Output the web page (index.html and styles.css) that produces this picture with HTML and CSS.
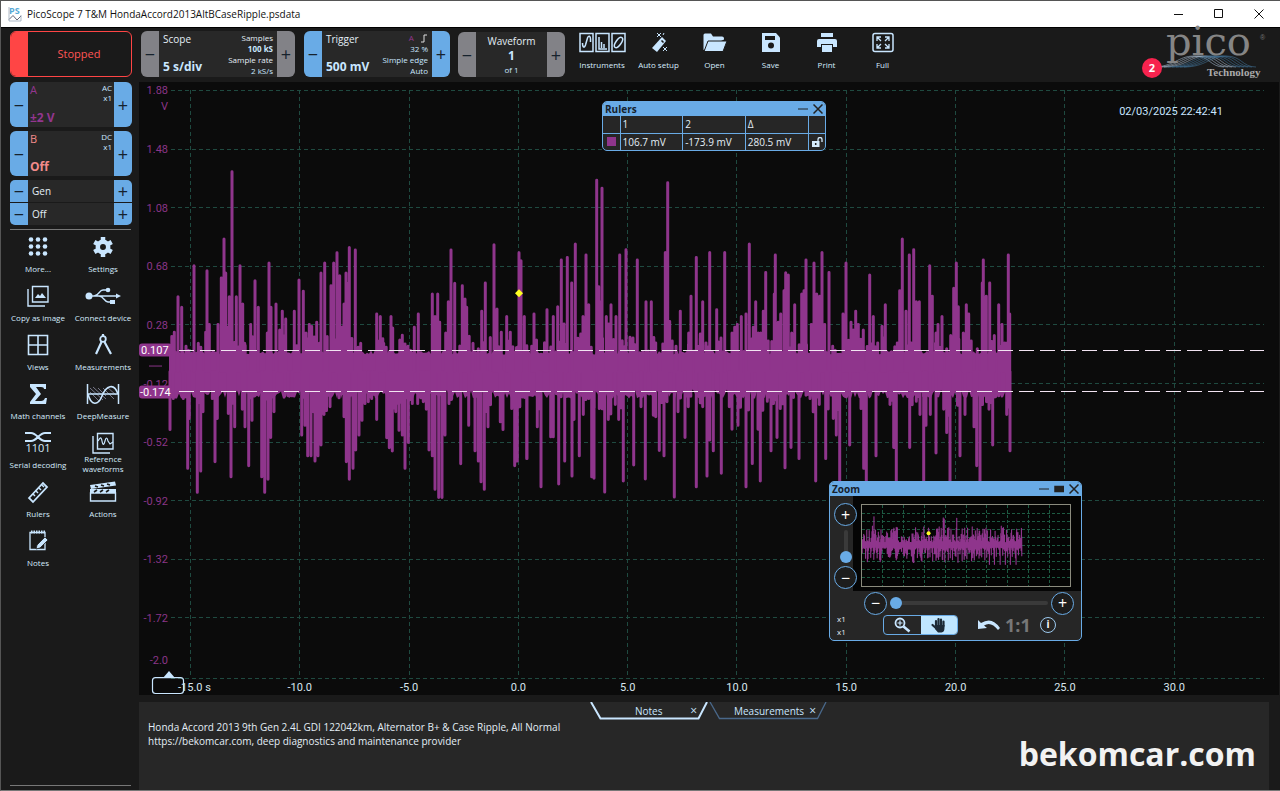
FILE: index.html
```html
<!DOCTYPE html>
<html lang="en">
<head>
<meta charset="utf-8">
<title>PicoScope 7 T&amp;M HondaAccord2013AltBCaseRipple.psdata</title>
<link rel="stylesheet" href="styles.css">
</head>
<body>
<div class="app">
  <header class="titlebar">
    <svg class="app-icon" viewBox="0 0 14 16" aria-hidden="true"><text x="1" y="8" class="app-icon-text">PS</text><path d="M1 13.500l4-4 4 4.500 4-4" fill="none" stroke="#667" stroke-width="1"/><path d="M1 1v14h12V9" fill="none" stroke="#9ab" stroke-width=".8"/></svg>
    <span class="title">PicoScope 7 T&amp;M HondaAccord2013AltBCaseRipple.psdata</span>
    <div class="win-controls">
      <button aria-label="Minimise"><svg viewBox="0 0 12 12"><path d="M1 6.500h9"/></svg></button>
      <button aria-label="Maximise"><svg viewBox="0 0 12 12"><path d="M1.500 1.500h8v8h-8z"/></svg></button>
      <button aria-label="Close"><svg viewBox="0 0 12 12"><path d="M1.500 1.500l9 9m0-9l-9 9"/></svg></button>
    </div>
  </header>

  <div class="toolbar">
    <button class="stopped"><i></i><span>Stopped</span></button>
    <div class="card scope grey">
      <button class="step" aria-label="Less">−</button>
      <div class="card-body">
        <div class="col"><span class="name">Scope</span><b class="value">5 s/div</b></div>
        <div class="facts"><span>Samples</span><b>100 kS</b><span>Sample rate</span><span class="ice">2 kS/s</span></div>
      </div>
      <button class="step" aria-label="More">+</button>
    </div>
    <div class="card trigger">
      <button class="step" aria-label="Less">−</button>
      <div class="card-body">
        <div class="col"><span class="name">Trigger</span><b class="value">500 mV</b></div>
        <div class="facts ice"><span><em>A</em> <svg class="edge" viewBox="0 0 8 9"><path d="M1 8h3V1h3"/></svg></span><span>32 %</span><span>Simple edge</span><span>Auto</span></div>
      </div>
      <button class="step" aria-label="More">+</button>
    </div>
    <div class="card waveform grey">
      <button class="step" aria-label="Previous">−</button>
      <div class="card-body centre"><span class="name">Waveform</span><b>1</b><small>of 1</small></div>
      <button class="step" aria-label="Next">+</button>
    </div>
    <nav class="tools">
      <button class="tool"><svg viewBox="0 0 47 22"><g fill="none" stroke="#c9e6ff" stroke-width="1.500"><path d="M1 1.500h13v18H1zM17 1.500h13v18H17zM33 1.500h13v18H33z"/><path d="M3.500 11c0 5 2 5 3 2l2-7c1-3 3-2 3 1v3M20 5v12h8M22.500 10v6M25 12v4"/><ellipse cx="39.500" cy="10.500" rx="2.600" ry="6" transform="rotate(35 39.500 10.500)"/></g></svg><span>Instruments</span></button>
      <button class="tool"><svg viewBox="0 0 20 22"><path d="M13 5l4 4-9 11-5-4z" fill="#c9e6ff"/><path d="M12.500 8.500l2 2" stroke="#1a1a1a" stroke-width="1.600"/><path d="M8 1l4 4m0-4L8 5m6 10l4 4m0-4l-4 4M14 3l1-2" stroke="#c9e6ff" stroke-width="1"/></svg><span>Auto setup</span></button>
      <button class="tool"><svg viewBox="0 0 26 22"><path d="M1.500 18V3q0-1.500 1.500-1.500h6l2 3h9q2 0 2 2v1" fill="#c9e6ff"/><path d="M2 19.500L6 9h19l-4 10.500z" fill="#c9e6ff" stroke="#1a1a1a" stroke-width="1"/></svg><span>Open</span></button>
      <button class="tool"><svg viewBox="0 0 20 22"><path d="M1 1h14l4 4.500V20H1z" fill="#c9e6ff"/><path d="M4 4h10v4H4z" fill="#1a1a1a"/><circle cx="10" cy="13.500" r="3" fill="#1a1a1a"/></svg><span>Save</span></button>
      <button class="tool"><svg viewBox="0 0 22 22"><path d="M5 1h12v4H5zM3 7h16q2 0 2 2v6h-4v-3H5v3H1V9q0-2 2-2z" fill="#c9e6ff"/><path d="M6 13h10v7H6z" fill="#c9e6ff"/></svg><span>Print</span></button>
      <button class="tool"><svg viewBox="0 0 22 22"><rect x="1" y="1.500" width="20" height="18" rx="2" fill="none" stroke="#c9e6ff" stroke-width="1.500"/><path d="M5 9V5h4M5 5l4 4M17 9V5h-4m4 0l-4 4M5 12v4h4m-4 0l4-4M17 12v4h-4m4 0l-4-4" fill="none" stroke="#c9e6ff" stroke-width="1.300"/></svg><span>Full</span></button>
    </nav>
    <div class="brand">
      <svg viewBox="0 0 124 52" role="img" aria-label="pico Technology">
        <g id="brand-waves" fill="none"></g>
        <text x="22" y="24" class="brand-name">pico</text><text x="116" y="9" class="brand-reg">®</text>
        <text x="63" y="45" class="brand-sub">Technology</text>
      </svg>
      <span class="badge">2</span>
    </div>
  </div>

  <div class="workspace">
    <aside class="sidebar">
      <div class="card channel a"><button class="step" aria-label="Less">−</button><div class="card-body"><div class="col"><span>A</span><b>±2 V</b></div><div class="facts"><span>AC</span><span>x1</span></div></div><button class="step" aria-label="More">+</button></div>
      <div class="card channel b"><button class="step" aria-label="Less">−</button><div class="card-body"><div class="col"><span>B</span><b>Off</b></div><div class="facts"><span>DC</span><span>x1</span></div></div><button class="step" aria-label="More">+</button></div>
      <div class="gen">
        <div class="card"><button class="step" aria-label="Less">−</button><div class="card-body">Gen</div><button class="step" aria-label="More">+</button></div>
        <div class="card"><button class="step" aria-label="Less">−</button><div class="card-body">Off</div><button class="step" aria-label="More">+</button></div>
      </div>
      <nav class="menu">
        <button class="tool"><svg viewBox="0 0 22 22"><g fill="#c9e6ff"><circle cx="4" cy="3.500" r="2.300"/><circle cx="11" cy="3.500" r="2.300"/><circle cx="18" cy="3.500" r="2.300"/><circle cx="4" cy="10.500" r="2.300"/><circle cx="11" cy="10.500" r="2.300"/><circle cx="18" cy="10.500" r="2.300"/><circle cx="4" cy="17.500" r="2.300"/><circle cx="11" cy="17.500" r="2.300"/><circle cx="18" cy="17.500" r="2.300"/></g></svg><span>More...</span></button>
        <button class="tool"><svg viewBox="0 0 22 22"><circle cx="11" cy="11" r="5.200" fill="none" stroke="#c9e6ff" stroke-width="4.500"/><path d="M11 1v4M11 17v4M2.300 6l3.500 2M16.200 14l3.500 2M2.300 16l3.500-2M16.200 8l3.500-2" stroke="#c9e6ff" stroke-width="4.500"/></svg><span>Settings</span></button>
        <button class="tool"><svg viewBox="0 0 22 22"><g fill="none" stroke="#c9e6ff" stroke-width="1.400"><path d="M5.500 1.500h15.500v15.500H5.500zM1 4v17h17"/></g><path d="M8 13l3-4 2 2 2-3 4 5z" fill="#c9e6ff"/></svg><span>Copy as image</span></button>
        <button class="tool"><svg viewBox="0 0 36 22"><g fill="none" stroke="#c9e6ff" stroke-width="1.300"><path d="M4 11h28M9 11c5 0 5-6 9-6h4M14 11c5 0 5 6 9 6h4"/></g><g fill="#c9e6ff"><circle cx="4" cy="11" r="3.500"/><circle cx="23" cy="5" r="2.300"/><path d="M25 15h5v4h-5zM31 8.500l5 2.500-5 2.500z"/></g></svg><span>Connect device</span></button>
        <button class="tool"><svg viewBox="0 0 22 22"><path d="M1.500 1.500h19v19h-19zM11 2v18M2 11h18" fill="none" stroke="#c9e6ff" stroke-width="1.600"/></svg><span>Views</span></button>
        <button class="tool"><svg viewBox="0 0 22 22"><circle cx="11" cy="5" r="2.800" fill="none" stroke="#c9e6ff" stroke-width="1.800"/><path d="M11 0v3M9.500 8L4 20M12.500 8L19 20" stroke="#c9e6ff" stroke-width="2.200"/></svg><span>Measurements</span></button>
        <button class="tool"><svg viewBox="0 0 22 22"><path d="M3 1h16v5h-2q0-2-3-2H9l5 7-6 7h6q3 0 4-3h2l-1 6H3v-2l6-8-6-7z" fill="#c9e6ff"/></svg><span>Math channels</span></button>
        <button class="tool"><svg viewBox="0 0 34 22"><path d="M4 5l13 12M4 9l9 9M7 4l13 12M17 5l11 11M21 4l9 8M12 5l8 8" stroke="#778" stroke-width="1"/><path d="M1.500 1v20M32.500 1v20M2 11h30" stroke="#c9e6ff" stroke-width="1.500"/><path d="M2 11c3 12 10 12 14 2s12-14 16-2" fill="none" stroke="#c9e6ff" stroke-width="1.600"/></svg><span>DeepMeasure</span></button>
        <button class="tool"><svg viewBox="0 0 26 22"><path d="M0 1h6c6 0 8 8 14 8h6M0 9h6c6 0 8-8 14-8h6" fill="none" stroke="#c9e6ff" stroke-width="2"/><text x="13" y="20" class="digits">1101</text></svg><span>Serial decoding</span></button>
        <button class="tool two-line"><svg viewBox="0 0 22 22"><path d="M5.500 1.500h15.500v15.500H5.500zM1 4v17h17" fill="none" stroke="#c9e6ff" stroke-width="1.400"/><path d="M6 9c2-3 3-5 4 0s2 4 3 0 2-4 3 0l2 3 3-2" fill="none" stroke="#c9e6ff" stroke-width="1.200"/></svg><span>Reference<br>waveforms</span></button>
        <button class="tool"><svg viewBox="0 0 22 22"><path d="M2 17L16 2l4 4L6 21z" fill="none" stroke="#c9e6ff" stroke-width="1.800"/><path d="M6 13l2 2m1-5l2 2m1-5l2 2m1-5l2 2" stroke="#c9e6ff" stroke-width="1.500"/></svg><span>Rulers</span></button>
        <button class="tool"><svg viewBox="0 0 28 22"><path d="M1.500 12v8h25v-8z" fill="none" stroke="#c9e6ff" stroke-width="1.400"/><path d="M1 8h26v4H1zM1 4l25-3.500 1 4L2 8z" fill="#c9e6ff"/><path d="M6 5l3 1m3-2l3 1m3-2l3 1M5 11l3-2m3 2l3-2m3 2l3-2" stroke="#1a1a1a" stroke-width="1.600"/></svg><span>Actions</span></button>
        <button class="tool"><svg viewBox="0 0 22 22"><path d="M3 2.500h15v17H3z" fill="none" stroke="#c9e6ff" stroke-width="1.300"/><path d="M4 2h14" stroke="#c9e6ff" stroke-width="3" stroke-dasharray="1.500 1"/><path d="M9 19l1-4 8-8 3 3-8 8z" fill="#c9e6ff" stroke="#1a1a1a" stroke-width=".8"/></svg><span>Notes</span></button>
      </nav>
    </aside>

    <main class="main">
      <section class="chart" aria-label="Channel A trace">
        <svg id="plot" class="plot"></svg>

        <section class="window rulers">
          <header><h2>Rulers</h2><button aria-label="Minimise"><svg viewBox="0 0 10 10"><path d="M0 5h10" stroke-width="1"/></svg></button><button aria-label="Close"><svg viewBox="0 0 10 10"><path d="M.5.5l9 9m0-9l-9 9"/></svg></button></header>
          <table>
            <tr><th></th><th>1</th><th>2</th><th>Δ</th><th></th></tr>
            <tr><td><i class="swatch"></i></td><td>106.7 mV</td><td>-173.9 mV</td><td>280.5 mV</td><td><svg class="lock" viewBox="0 0 11 10"><path d="M0 4h7.500v6H0z" fill="#d5ebfc"/><path d="M6 4V2.500a2 2 0 0 1 4 0V5" fill="none" stroke="#d5ebfc" stroke-width="1.300"/><path d="M3.700 6v2" stroke="#222" stroke-width="1.500"/></svg></td></tr>
          </table>
        </section>

        <section class="window zoom">
          <header><h2>Zoom</h2><button aria-label="Minimise"><svg viewBox="0 0 10 10"><path d="M0 5h10" stroke-width="1"/></svg></button><button aria-label="Restore"><svg viewBox="0 0 10 10"><path d="M1 2.500h9v5H1z" fill="#222"/></svg></button><button aria-label="Close"><svg viewBox="0 0 10 10"><path d="M.5.5l9 9m0-9l-9 9"/></svg></button></header>
          <div class="zoom-top">
            <div class="vzoom"><button class="round" aria-label="Zoom in vertically">+</button><input class="vrange" type="range" aria-label="Vertical zoom" min="0" max="100" value="0"><button class="round" aria-label="Zoom out vertically">−</button></div>
            <div class="overview"><svg id="overview"></svg></div>
          </div>
          <div class="hzoom"><button class="round" aria-label="Zoom out horizontally">−</button><input class="hrange" type="range" aria-label="Horizontal zoom" min="0" max="100" value="0"><button class="round" aria-label="Zoom in horizontally">+</button></div>
          <div class="zoom-bottom">
            <div class="factors"><span>x1</span><span>x1</span></div>
            <div class="modes">
              <button aria-label="Zoom"><svg viewBox="0 0 18 16"><circle cx="7" cy="6" r="4.500" fill="none" stroke="#c9e6ff" stroke-width="1.800"/><path d="M10.500 9.500l6 5" stroke="#c9e6ff" stroke-width="2.600"/><path d="M4.500 6h5M7 3.500v5" stroke="#c9e6ff" stroke-width="1.200"/></svg></button>
              <button class="on" aria-label="Pan"><svg viewBox="0 0 18 16"><path d="M6 9V4m2.500 4V2M11 8V2.500M13.500 9V4.500M2.500 8L7 12" stroke="#1c2a36" stroke-width="2.200" stroke-linecap="round"/><path d="M5 8h9.500v3q0 4-3 4.500H8L5 12z" fill="#1c2a36"/></svg></button>
            </div>
            <button class="undo" aria-label="Undo"><svg viewBox="0 0 24 16"><path d="M1 3v9l9-1-3-2.500q7-4.500 14 4.500l2-2Q15-1 4 6z" fill="#c9e6ff"/></svg></button>
            <button class="ratio">1:1</button>
            <button class="info" aria-label="Info">i</button>
          </div>
        </section>
      </section>

      <section class="notes">
        <div class="tabs">
          <div class="tab active"><svg viewBox="0 0 118 18" preserveAspectRatio="none"><path d="M1 0l9.500 16.500h98L117 0"/></svg><button>Notes</button><button class="shut" aria-label="Close Notes">×</button></div>
          <div class="tab wide"><svg viewBox="0 0 118 18" preserveAspectRatio="none"><path d="M1 0l9.500 16.500h98L117 0"/></svg><button>Measurements</button><button class="shut" aria-label="Close Measurements">×</button></div>
        </div>
        <p>Honda Accord 2013 9th Gen 2.4L GDI 122042km, Alternator B+ &amp; Case Ripple, All Normal<br>https://bekomcar.com, deep diagnostics and maintenance provider</p>
        <strong class="watermark">bekomcar.com</strong>
      </section>
    </main>
  </div>
</div>
<script src="chart.js"></script>
</body>
</html>
```
FILE: styles.css
```css
* { box-sizing: border-box; }
body { margin: 0; background: #1a1a1a; color: #e4eef6; font: 11px/14px "Open Sans", "Noto Sans", sans-serif; }
button { appearance: none; margin: 0; padding: 0; border: 0; background: none; color: inherit; font: inherit; }
h2, p { margin: 0; }
.app { display: flex; flex-direction: column; height: 100vh; min-height: 700px; border-left: 1px solid #555; border-bottom: 1px solid #777; overflow: hidden; }

.titlebar { display: flex; align-items: center; height: 28px; padding-left: 7px; background: #fff; color: #111; border-top: 1px solid #555; border-bottom: 1px solid #000; }
.app-icon { width: 14px; height: 16px; margin-right: 5px; overflow: visible; }
.app-icon-text { font: 700 9px "Open Sans", sans-serif; fill: #58a9d6; }
.title { flex: 1; font-size: 10px; }
.win-controls { display: flex; padding-right: 1px; }
.win-controls button { display: flex; justify-content: center; width: 40px; }
.win-controls svg { width: 12px; height: 12px; fill: none; stroke: #111; }

.toolbar { display: flex; height: 54px; padding: 3px 12px 5px 9px; }
.stopped { display: flex; width: 122px; border: 1px solid #ff4545; border-radius: 6px; color: #ff5555; overflow: hidden; }
.stopped i { width: 17px; height: 100%; background: #ff4545; }
.stopped span { flex: 1; align-self: center; padding-right: 1px; }
.card { display: flex; background: #282828; border-radius: 6px; overflow: hidden; }
.step { flex: none; width: 18px; background: #69abe6; color: #16222d; font: 18px/18px "Open Sans", sans-serif; }
.grey .step { background: #828287; }
.card-body { display: flex; flex: 1; justify-content: space-between; padding: 1px 4px; white-space: nowrap; }
.col { display: flex; flex-direction: column; justify-content: space-between; }
.name { line-height: 14px; font-size: 10px; }
.value { color: #c9e6ff; font-size: 12px; line-height: 18px; }
.facts { display: flex; flex-direction: column; align-items: flex-end; font-size: 8px; line-height: 11px; }
.facts b, .ice { color: #c9e6ff; }
.facts em { color: #93368f; font-style: normal; }
.edge { width: 8px; height: 9px; fill: none; stroke: #ddd; vertical-align: -2px; margin-left: 4px; }
.scope { width: 154px; margin-left: 9px; }
.trigger { width: 146px; margin-left: 9px; }
.waveform { width: 107px; margin: 1px 0 0 8px; }
.centre { flex-direction: column; align-items: center; justify-content: space-around; }
.centre b { color: #c9e6ff; font-size: 12px; }
.centre small { font-size: 8px; line-height: 12px; color: #c9e6ff; }

.tools { display: flex; margin-left: 9px; }
.tool { display: flex; flex-direction: column; align-items: center; gap: 5px; color: #d5ebfc; font-size: 8px; line-height: 12px; white-space: nowrap; }
.tool svg { height: 22px; width: auto; overflow: visible; }
.tools .tool { width: 56px; padding-top: 1px; }
.tools .tool + .tool { padding-left: 1px; }
.brand { position: relative; width: 124px; margin-left: auto; }
.brand svg { width: 124px; height: 52px; overflow: visible; }
.brand-name { font: 40px "DejaVu Serif", serif; fill: #858585; }
.brand-reg { font: 7px "Liberation Sans", sans-serif; fill: #777; }
.brand-sub { font: 700 11px "Liberation Serif", serif; fill: #aaa; }
.badge { position: absolute; left: -2px; top: 27px; width: 20px; height: 20px; border-radius: 50%; background: #f7234e; color: #fff; font-weight: 700; line-height: 19px; text-align: center; }

.workspace { display: flex; flex: 1; min-height: 0; }
.sidebar { display: flex; flex-direction: column; flex: none; width: 138px; padding: 0 7px 4px 9px; gap: 4px; }
.channel { height: 45px; }
.channel .card-body { padding: 1px 2px 2px; }
.channel b { font-size: 12px; }
.a .col { color: #93368f; }
.b .col { color: #f28b8b; }
.channel .facts { color: #c9e6ff; }
.channel .facts span { line-height: 10px; }
.gen { display: flex; flex-direction: column; gap: 1px; }
.gen .card { height: 22px; border-radius: 5px 5px 0 0; }
.gen .card + .card { border-radius: 0 0 5px 5px; }
.gen .card-body { align-items: center; padding: 0 4px; font-size: 10px; }
.menu { flex: 1; display: grid; grid-template-columns: 56px 74px; grid-auto-rows: 49px; align-content: start; border-top: 1px solid #777; border-bottom: 1px solid #777; padding-top: 6px; margin: 0 1px 0 0; }
.menu .tool { justify-content: flex-start; }
.menu .two-line { gap: 0; }
.two-line span { line-height: 10px; }
.digits { font: 11px "Open Sans", sans-serif; fill: #d5ebfc; text-anchor: middle; }

.main { display: flex; flex: 1; flex-direction: column; min-width: 0; gap: 7px; padding-right: 1px; }
.chart { position: relative; flex: 1; min-height: 0; background: #0b0b0b; }
.plot { display: block; width: 100%; height: 100%; font: 11px Roboto, sans-serif; }
.grid { stroke: #1f4a40; stroke-dasharray: 4 3; shape-rendering: crispEdges; }
.y-label { fill: #8a3588; text-anchor: end; }
.x-label { fill: #d8e6ee; text-anchor: middle; }
.stamp { fill: #c9e6ff; text-anchor: middle; }
.tag { fill: #8f358c; }
.tag-text { fill: #fff; }
.ruler { stroke: #f2e4f2; stroke-dasharray: 15 6; shape-rendering: crispEdges; }
.band { fill: #8f358c; }
.spikes { fill: none; stroke: #8f358c; stroke-linecap: round; stroke-width: 3; }
#overview .spikes { stroke-width: 6; }
.marker { fill: #ff2; }

.window { position: absolute; border: 1px solid #69abe6; border-radius: 5px; background: #262626; overflow: hidden; }
.window header { display: flex; align-items: center; height: 14px; padding: 0 2px; background: #69abe6; color: #16222d; gap: 5px; }
.window h2 { flex: 1; font-size: 10px; line-height: 14px; }
.window header svg { display: block; width: 10px; height: 10px; fill: none; stroke: #222; stroke-width: 1.5; }
.rulers { left: 463px; top: 19px; width: 224px; }
.rulers table { width: 100%; border-collapse: collapse; table-layout: fixed; font-size: 10px; line-height: 14px; }
.rulers th, .rulers td { height: 17px; padding: 0 2px; border-left: 1px solid #69abe6; border-top: 1px solid #69abe6; font-weight: 400; text-align: left; white-space: nowrap; }
.rulers th:first-child, .rulers td:first-child { width: 17px; border-left: 0; }
.rulers th:last-child, .rulers td:last-child { width: 17px; }
.rulers tr:first-child th { border-top: 0; }
.swatch { display: block; width: 9px; height: 9px; margin-left: 2px; background: #8f358c; }
.lock { display: block; width: 11px; height: 10px; margin-left: 1px; }

.zoom { left: 690px; top: 399px; width: 253px; height: 160px; }
.zoom-top { display: flex; height: 95px; }
.vzoom { display: flex; flex-direction: column; align-items: center; justify-content: space-between; width: 23px; margin-left: 4px; padding: 7px 0 2px; z-index: 1; }
.overview { flex: 1; padding: 8px 10px 0 8px; margin-left: -4px; background: #050505; }
.overview svg { display: block; width: 100%; height: 83px; border: 1px solid #8a8a7d; overflow: hidden; }
#overview .grid { stroke: #1d5a42; stroke-dasharray: 3 2; }
.round { flex: none; width: 23px; height: 23px; border: 1px solid #69abe6; border-radius: 50%; background: #1d1d1d; color: #fff; font-size: 16px; line-height: 20px; }
input[type=range] { appearance: none; margin: 0; background: none; }
input[type=range]::-webkit-slider-runnable-track { background: #3a3a3a; border-radius: 2px; }
input[type=range]::-webkit-slider-thumb { appearance: none; width: 12px; height: 12px; border-radius: 50%; background: #69abe6; }
.vrange { width: 12px; height: 33px; writing-mode: vertical-lr; direction: rtl; }
.vrange::-webkit-slider-runnable-track { width: 4px; height: 33px; }
.vrange::-webkit-slider-thumb { margin-left: -4px; }
.hrange { flex: 1; height: 12px; }
.hrange::-webkit-slider-runnable-track { height: 4px; }
.hrange::-webkit-slider-thumb { margin-top: -4px; }
.hzoom { display: flex; align-items: center; gap: 3px; height: 24px; padding: 0 7px 0 34px; }
.zoom-bottom { display: flex; align-items: center; height: 19px; padding-left: 7px; }
.factors { display: flex; flex-direction: column; width: 46px; font-size: 8px; line-height: 13px; }
.modes { display: flex; width: 75px; height: 20px; border: 1px solid #69abe6; border-radius: 4px; overflow: hidden; }
.modes button { flex: 1; display: flex; align-items: center; justify-content: center; }
.modes .on { background: #bfe6ff; }
.modes svg { width: 18px; height: 16px; }
.undo { width: 24px; height: 16px; margin-left: 19px; }
.undo svg { width: 24px; height: 16px; }
.ratio { margin-left: 4px; color: #777; font: 700 18px/20px "Open Sans", sans-serif; }
.info { width: 16px; height: 16px; margin-left: auto; margin-right: 25px; border: 1px solid #9cc9ee; border-radius: 50%; color: #fff; font-weight: 700; font-size: 10px; line-height: 13px; }

.notes { position: relative; height: 88px; margin-right: 10px; background: #272727; }
.tabs { display: flex; justify-content: center; gap: 1px; height: 18px; margin-left: 9px; }
.tab { position: relative; display: flex; align-items: center; width: 118px; padding: 0 11px 0 45px; color: #c9e6ff; }
.tab button { position: relative; font-size: 10px; line-height: 14px; }
.tab .shut { margin-left: auto; font-size: 12px; }
.wide { padding: 0 11px 0 25px; }
.tab svg { position: absolute; inset: 0; width: 100%; height: 100%; fill: none; stroke: #49688a; stroke-width: 1.300; }
.active svg { stroke: #c9e6ff; stroke-width: 2; }
.notes p { padding-left: 9px; font-size: 10px; }
.watermark { position: absolute; right: 13px; bottom: 18px; color: #f2f2f2; font: 700 32px/36px "Open Sans", sans-serif; }
```
FILE: chart.js
```js
// Plot space: 1140 x 614 units, origin at the chart's top left corner.
const W = 1140, H = 614;

// Peaks of the trace as [x, y] pairs on a fine raster, three steps to a unit.
const runs = [
  { x: -4, y: -2, up: true, pts: "118,755 129,648 140,680 177,555 153,797 190,788 212,755 216,570 223,732 249,732 259,592 267,475 272,577 276,740 283,648 291,273 304,648 315,555 323,670 329,788 347,732 360,600 370,680 397,757 402,547 408,680 423,670 434,748 442,692 452,715 478,692 492,598 505,632 513,757 523,732 530,738 537,770 545,725 553,788 558,577 569,547 588,615 596,547 606,516 614,585 622,740 627,670 633,577 638,610 643,500 661,508 677,788 725,700 736,708 746,788 768,708 773,742 802,764 810,790 819,797 838,740 850,700 892,640 900,708 908,640 914,725 932,757 940,663 948,508 959,608 982,615 990,655 995,680 1014,788 1030,805 1040,692 1051,607 1066,771 1077,492 1086,685 1099,755 1115,708 1126,755 1152,516 1158,540 1168,708 1190,797 1197,700" },
  { x: -4, y: 258, up: false, pts: "105,273 115,180 145,180 158,390 163,240 187,462 197,398 204,220 232,180 240,370 247,240 280,225 288,415 299,265 322,212 330,265 341,382 351,245 380,415 389,462 399,423 407,297 417,220 450,172 460,172 470,172 500,290 510,260 518,352 528,352 540,368 549,352 558,320 567,228 585,205 612,178 627,235 634,370 643,423 654,390 662,335 672,290 681,245 690,195 700,190 710,180 725,243 755,298 763,328 772,338 782,220 792,275 802,290 810,390 820,312 832,195 848,195 865,190 874,212 882,335 892,352 900,453 911,478 921,478 930,290 942,195 950,180 977,376 1001,260 1020,337 1030,368 1038,430 1048,453 1059,265 1096,250 1104,273 1130,210 1139,382 1147,368 1175,360" },
  { x: 381, y: 78, up: true, pts: "13,468 35,557 42,460 81,447 100,468 113,438 124,298 132,490 142,290 155,367 166,250 182,520 189,468 198,283 206,432 230,58 236,378 240,423 246,82 259,468 266,490 273,432 288,468 299,283 305,547 318,267 330,530 339,532 352,298 378,423 394,423 407,547 436,275 443,66 449,483 468,557 481,452 506,517 513,407 529,290 541,520 548,423 558,547 569,275 590,447 603,532 614,275 636,517 644,500 652,492 664,468 678,460 688,250 700,500 707,423 715,517 722,517 730,452 737,335 763,400 766,283 775,485 782,460 792,390 797,336 805,343 815,517 824,432 845,400 852,390 858,298 874,492 882,307 890,400 899,407 906,275 914,492 927,335 938,557 969,460 978,307 990,540 993,485 1000,508 1007,452 1015,492 1030,508 1049,343 1060,468 1073,547 1086,497 1096,432 1132,547 1139,390 1147,235 1158,452 1168,283 1181,267 1189,423 1198,423 1229,315 1237,407 1248,517 1254,492 1266,468 1280,565 1292,525 1301,383 1309,307 1315,438 1330,517 1339,432 1346,460 1372,565 1387,367 1390,298 1399,407 1409,367 1423,525 1436,432 1446,492 1454,547 1465,283 1469,460" },
  { x: 381, y: 78, up: false, pts: "21,900 52,805 63,985 92,835 100,835 116,977 134,908 156,953 162,783 178,892 190,768 206,720 215,955 222,960 238,750 247,750 254,1001 265,783 286,738 296,783 310,968 341,920 363,745 376,962 400,770 407,775 418,876 432,892 441,730 463,1016 474,760 495,837 505,745 529,985 548,745 561,953 569,845 580,877 604,945 628,745 636,812 654,800 678,985 697,915 714,812 721,968 742,728 753,877 771,837 781,750 795,928 813,867 837,900 858,710 870,720 887,968 898,738 917,900 940,780 949,830 959,1060 989,860 1023,750 1031,930 1039,1060 1068,892 1110,738 1121,867 1129,1060 1169,867 1189,728 1200,768 1211,1060 1218,800 1231,768 1248,884 1271,752 1280,822 1290,1060 1320,892 1335,768 1362,805 1370,922 1380,1060 1407,752 1418,860 1436,712 1460,768 1470,877" }
];

let seed = 7;
const rand = () => (seed = (seed * 16807) % 2147483647) / 2147483647;

let spikes = "", edge = "";
for (const run of runs) {
  for (const pair of run.pts.split(" ")) {
    const [px, py] = pair.split(",").map(Number);
    const x = run.x + px / 3, y = run.y + py / 3 + (run.up ? 1 : -1);
    spikes += `M${x.toFixed(1)} 290V${y.toFixed(1)}`;
    // about half of the peaks have a shorter shoulder beside them
    const side = x + (rand() < 0.5 ? -2.5 : 2.5);
    const foot = run.up ? Math.max(y + 4, 266 - rand() * 12) : Math.min(y - 4, 314 + rand() * 20);
    if (rand() < 0.5 && side > 32 && side < 871) spikes += `M${side.toFixed(1)} 290V${foot.toFixed(1)}`;
  }
}
for (let x = 30; x < 872; x += 2) edge += `L${x} ${(268 + rand() * 5).toFixed(1)}`;
for (let x = 872; x > 30; x -= 2) edge += `L${x} ${(317 - rand() ** 2 * 9).toFixed(1)}`;
const trace = `<path class="band" d="M30 290${edge}Z"/><path class="spikes" d="${spikes}"/>`;

const px = x => (x / W * 100).toFixed(3) + "%";
const py = y => (y / H * 100).toFixed(3) + "%";
const line = (x1, y1, x2, y2, c) => `<line class="${c}" x1="${px(x1)}" y1="${py(y1)}" x2="${px(x2)}" y2="${py(y2)}"/>`;
const text = (x, y, s, c) => `<text class="${c}" x="${px(x)}" y="${py(y)}" dy="4">${s}</text>`;

let plot = "";
const volts = ["1.88", "1.48", "1.08", "0.68", "0.28", "-0.12", "-0.52", "-0.92", "-1.32", "-1.72"];
const times = ["-15.0 s", "-10.0", "-5.0", "0.0", "5.0", "10.0", "15.0", "20.0", "25.0", "30.0"];
volts.forEach((v, i) => {
  const y = 8.500 + i * 58.700;
  plot += line(32, y, 1125, y, "grid") + text(29, y, v, "y-label");
});
plot += line(32, 597, 1125, 597, "grid") + text(29, 579, "-2.0", "y-label") + text(29, 24, "V", "y-label");
times.forEach((t, i) => {
  const x = 51.500 + i * 109.300;
  plot += line(x, 8, x, 597, "grid") + text(i ? x : x + 4, 606, t, "x-label");
});
plot += `<svg width="100%" height="100%" viewBox="0 0 ${W} ${H}" preserveAspectRatio="none">${trace}
  <path d="M10 284.500h13" stroke="#8a3588"/>
  <path class="marker" d="M380 207.500l4 4-4 4-4-4z"/>
  <path d="M24 597l6-7 6 7z" fill="#c9e6ff"/>
  <rect x="13.500" y="596.500" width="31" height="16" rx="3" fill="none" stroke="#c9e6ff" stroke-width="1.200"/>
  <rect class="tag" x="0" y="262" width="33" height="13" rx="3"/>
  <rect class="tag" x="0" y="304" width="33" height="13" rx="3"/></svg>`;
plot += line(40, 268.500, 1125, 268.500, "ruler") + line(40, 310.500, 1125, 310.500, "ruler");
plot += text(2, 268.500, "0.107", "tag-text") + text(1, 310.500, "-0.174", "tag-text");
plot += text(1032, 29, "02/03/2025 22:42:41", "stamp");
document.getElementById("plot").innerHTML = plot;

let mini = "";
for (let i = 1; i < 10; i++) {
  mini += `<line class="grid" x1="${i * 10}%" y1="0" x2="${i * 10}%" y2="100%"/>`;
  mini += `<line class="grid" x1="0" y1="${i * 10}%" x2="100%" y2="${i * 10}%"/>`;
}
mini += `<svg width="100%" height="100%" viewBox="30 8 1095 589" preserveAspectRatio="none">${trace}</svg>`;
mini += `<circle class="marker" cx="32%" cy="35%" r="2"/>`;
document.getElementById("overview").innerHTML = mini;

// Fading sine lines under the logo name
let waves = "";
for (let i = 0; i < 9; i++) {
  const x = i * 4;
  waves += `<path d="M${8 + x} 36C${30 + x} 36 ${34 + x} 25 ${50 + x} 25S${66 + x} 36 ${80 + x} 36" stroke="${i < 4 ? "#9fb4c8" : "#3f7096"}" stroke-width=".6"/>`;
}
document.getElementById("brand-waves").innerHTML = waves;
```
